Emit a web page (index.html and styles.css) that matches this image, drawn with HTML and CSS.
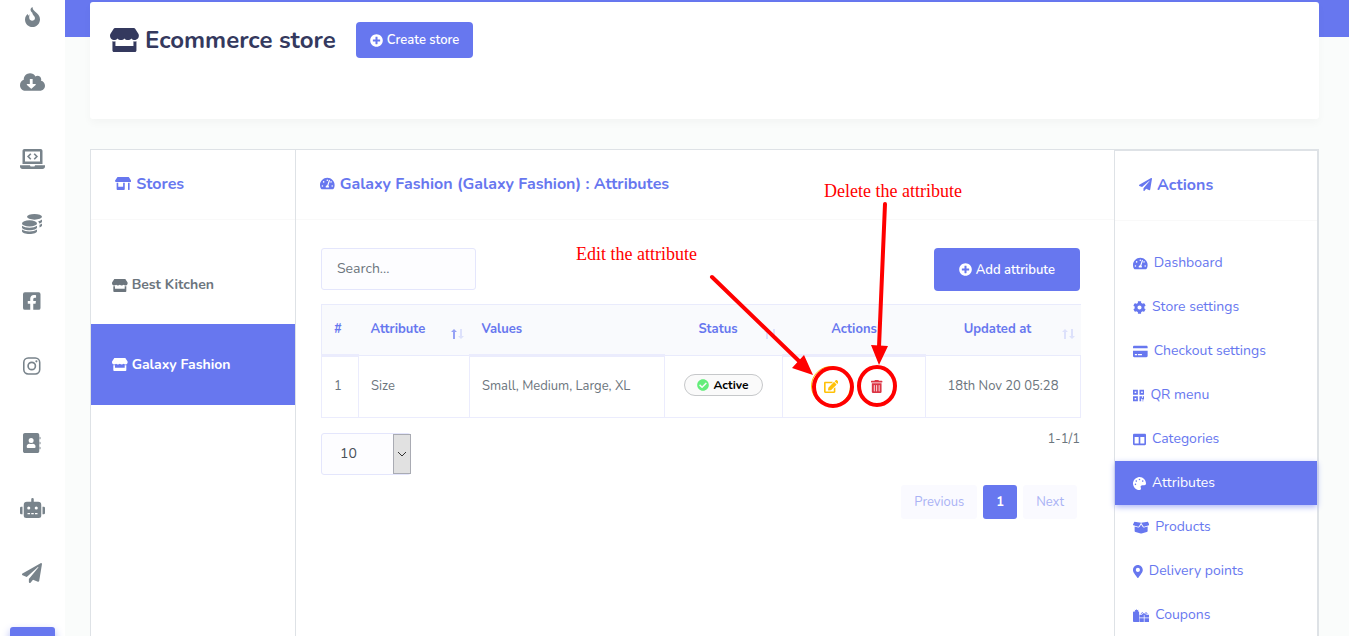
FILE: index.html
```html
<!DOCTYPE html>
<html lang="en">
<head>
<meta charset="utf-8">
<title>Ecommerce store</title>
<link rel="stylesheet" href="styles.css">
</head>
<body>
<svg class="defs" aria-hidden="true">
  <defs>
    <path id="store" d="M602 118.6L537.1 15C531.3 5.7 521 0 510 0H106C95 0 84.7 5.7 78.9 15L14 118.6c-33.5 53.5-3.8 127.9 58.8 136.4 4.5.6 9.1.9 13.7.9 29.6 0 55.8-13 73.8-33.1 18 20.1 44.3 33.1 73.8 33.1 29.6 0 55.8-13 73.8-33.1 18 20.1 44.3 33.1 73.8 33.1 29.6 0 55.8-13 73.8-33.1 18.1 20.1 44.3 33.1 73.8 33.1 4.7 0 9.2-.3 13.7-.9 62.8-8.4 92.6-82.8 59-136.4zM529.5 288c-10 0-19.9-1.5-29.5-3.8V384H116v-99.8c-9.6 2.2-19.5 3.8-29.5 3.8-6 0-12.1-.4-18-1.2-5.6-.8-11.1-2.1-16.4-3.6V480c0 17.7 14.3 32 32 32h448c17.7 0 32-14.3 32-32V283.2c-5.4 1.6-10.8 2.9-16.4 3.6-6.1.8-12.1 1.2-18.2 1.2z"/>
    <path id="plus" d="M256 8C119 8 8 119 8 256s111 248 248 248 248-111 248-248S393 8 256 8zm144 276c0 6.6-5.4 12-12 12h-92v92c0 6.6-5.4 12-12 12h-56c-6.6 0-12-5.4-12-12v-92h-92c-6.6 0-12-5.4-12-12v-56c0-6.6 5.4-12 12-12h92v-92c0-6.6 5.4-12 12-12h56c6.6 0 12 5.4 12 12v92h92c6.6 0 12 5.4 12 12v56z"/>
    <path id="plane" d="M476 3.2L12.5 270.6c-18.1 10.4-15.8 35.6 2.2 43.2L121 358.4l287.3-253.2c5.5-4.9 13.3 2.6 8.6 8.3L176 407v80.5c0 23.6 28.5 32.9 42.5 15.8L282 426l124.6 52.2c14.2 6 30.4-2.9 33-18.2l72-432C515 7.8 493.3-6.8 476 3.2z"/>
    <path id="gauge" d="M288 32C128.94 32 0 160.94 0 320c0 52.8 14.25 102.26 39.06 144.8 5.61 9.62 16.3 15.2 27.44 15.2h443c11.14 0 21.83-5.58 27.44-15.2C561.75 422.26 576 372.8 576 320c0-159.06-128.94-288-288-288zm0 64c14.71 0 26.58 10.13 30.32 23.65-1.11 2.26-2.64 4.23-3.45 6.67l-9.22 27.67c-5.13 3.49-10.97 6.01-17.64 6.01-17.67 0-32-14.33-32-32S270.33 96 288 96zM96 384c-17.67 0-32-14.33-32-32s14.33-32 32-32 32 14.33 32 32-14.33 32-32 32zm48-160c-17.67 0-32-14.33-32-32s14.33-32 32-32 32 14.33 32 32-14.33 32-32 32zm246.77-72.41l-61.33 184C343.13 347.33 352 364.54 352 384c0 11.72-3.38 22.55-8.88 32H232.88c-5.5-9.45-8.88-20.28-8.88-32 0-33.94 26.5-61.43 59.9-63.59l61.34-184.01c4.17-12.56 17.73-19.45 30.36-15.17 12.57 4.19 19.35 17.79 15.17 30.36zm14.66 57.2l15.52-46.55c3.47-1.29 7.13-2.23 11.05-2.23 17.67 0 32 14.33 32 32s-14.33 32-32 32c-11.38-.01-20.89-6.28-26.57-15.22zM480 384c-17.67 0-32-14.33-32-32s14.33-32 32-32 32 14.33 32 32-14.33 32-32 32z"/>
    <path id="sort-up" d="M3 0L6 3H4v7H2V3H0z"/>
    <path id="sort-down" d="M10 10L7 7h2V0h2v7h2z"/>
  </defs>
</svg>

<nav class="rail" aria-label="Main">
  <a href="#" aria-label="Trending"><svg viewBox="0 0 384 512"><path fill-rule="evenodd" d="M194 0c-3 40 12 72 60 112 76 62 130 112 130 200 0 112-86 200-192 200S0 428 0 318c0-78 42-122 74-142 2 20 2 36 10 50 10-14 24-28 36-40C96 258 104 352 184 352c62 0 88-58 58-108-22-36-52-52-54-98-70-52-54-120 6-146z"/></svg></a>
  <a href="#" aria-label="Downloads"><svg viewBox="0 0 640 512"><path fill-rule="evenodd" d="M537.6 226.6c4.1-10.7 6.4-22.4 6.4-34.6 0-53-43-96-96-96-19.7 0-38.1 6-53.3 16.2C367 64.2 315.3 32 256 32c-88.4 0-160 71.6-160 160 0 2.7.1 5.4.2 8.1C40.2 219.8 0 273.2 0 336c0 79.5 64.5 144 144 144h368c70.7 0 128-57.3 128-128 0-61.9-44-113.6-102.4-125.4zM252 176h72v128h64c14 0 22 14 12 26L300 424c-6 6-16 6-22 0l-100-94c-10-12-2-26 12-26h62z"/></svg></a>
  <span class="rail-gap"></span>
  <a href="#" aria-label="Widgets"><svg viewBox="0 0 640 512"><path fill-rule="evenodd" d="M112 0h416c26 0 48 22 48 48v336H64V48c0-26 22-48 48-48zm16 64v256h384V64zM0 416h256c2 20 14 32 32 32h64c18 0 30-12 32-32h256v32c0 35-29 64-64 64H64c-35 0-64-29-64-64z"/><path d="M276 122l-68 70 68 70M364 122l68 70-68 70" fill="none" stroke="currentColor" stroke-width="42"/></svg></a>
  <a href="#" aria-label="Payments"><svg viewBox="0 0 512 512"><ellipse cx="320" cy="72" rx="192" ry="72"/><path d="M416 182c40-10 76-24 96-44v52c0 24-30 44-72 56-8-26-10-44-24-64zM448 278c26-8 48-20 64-34v52c0 20-24 38-64 52z"/><ellipse cx="192" cy="240" rx="192" ry="80"/><path d="M0 300c84 66 300 66 384 0v46c0 36-84 70-192 70S0 382 0 346zM0 396c84 66 300 66 384 0v46c0 36-84 70-192 70S0 478 0 442z"/></svg></a>
  <span class="rail-gap"></span>
  <a href="#" aria-label="Facebook"><svg viewBox="0 0 448 512"><path d="M400 32H48A48 48 0 0 0 0 80v352a48 48 0 0 0 48 48h137.25V327.69h-63V256h63v-54.64c0-62.15 37-96.48 93.67-96.48 27.14 0 55.52 4.84 55.52 4.84v61h-31.27c-30.81 0-40.42 19.12-40.42 38.73V256h68.78l-11 71.69h-57.78V480H400a48 48 0 0 0 48-48V80a48 48 0 0 0-48-48z"/></svg></a>
  <a href="#" aria-label="Instagram"><svg viewBox="0 0 448 512"><rect x="20" y="52" width="408" height="408" rx="112" fill="none" stroke="currentColor" stroke-width="40"/><circle cx="224" cy="256" r="94" fill="none" stroke="currentColor" stroke-width="42"/><circle cx="343" cy="137" r="27"/></svg></a>
  <span class="rail-gap"></span>
  <a href="#" aria-label="Contacts"><svg viewBox="0 0 448 512"><path fill-rule="evenodd" d="M48 0h320c26 0 48 22 48 48v416c0 26-22 48-48 48H48c-26 0-48-22-48-48V48C0 22 22 0 48 0zm160 128a64 64 0 1 0 0 128 64 64 0 0 0 0-128zm-44 144c-36 0-68 28-68 64v28c0 12 10 20 22 20h180c12 0 22-8 22-20v-28c0-36-32-64-68-64-28 10-60 10-88 0z"/><path d="M424 96h8c9 0 16 7 16 16v32c0 9-7 16-16 16h-8zM424 224h8c9 0 16 7 16 16v32c0 9-7 16-16 16h-8zM424 352h8c9 0 16 7 16 16v32c0 9-7 16-16 16h-8z"/></svg></a>
  <a href="#" aria-label="Bots"><svg viewBox="0 0 640 512"><path d="M32,224H64V416H32A32,32,0,0,1,0,384V256A32,32,0,0,1,32,224Zm512-48V448a64,64,0,0,1-64,64H160a64,64,0,0,1-64-64V176a80,80,0,0,1,80-80H288V32a32,32,0,0,1,64,0V96H464A80,80,0,0,1,544,176ZM264,256a40,40,0,1,0-40,40A40,40,0,0,0,264,256Zm-8,128H192v32h64Zm96,0H288v32h64ZM456,256a40,40,0,1,0-40,40A40,40,0,0,0,456,256Zm-8,128H384v32h64ZM640,256V384a32,32,0,0,1-32,32H576V224h32A32,32,0,0,1,640,256Z"/></svg></a>
  <a href="#" aria-label="Broadcast"><svg viewBox="0 0 512 512"><use href="#plane"/></svg></a>
  <a href="#" class="rail-active" aria-label="Store"></a>
</nav>

<div class="page">
  <header class="page-head">
    <h1><svg viewBox="0 0 616 512"><use href="#store"/></svg>Ecommerce store</h1>
    <button class="btn" type="button"><svg viewBox="0 0 512 512"><use href="#plus"/></svg>Create store</button>
  </header>

  <main class="panels">
    <section class="panel stores">
      <h2><svg viewBox="0 0 640 512"><path d="M320 384H128V224H64v256c0 17.7 14.3 32 32 32h256c17.7 0 32-14.3 32-32V224h-64v160zm314.6-241.8l-85.3-128c-6-8.9-16-14.2-26.7-14.2H117.4c-10.7 0-20.7 5.3-26.6 14.2l-85.3 128c-14.2 21.3 1 49.8 26.6 49.8H608c25.5 0 40.7-28.5 26.6-49.8zM512 496c0 8.800 7.200 16 16 16h32c8.800 0 16-7.200 16-16V224h-64v272z"/></svg>Stores</h2>
      <div class="store-list">
        <a href="#"><svg viewBox="0 0 616 512"><use href="#store"/></svg>Best Kitchen</a>
        <a href="#" class="active"><svg viewBox="0 0 616 512"><use href="#store"/></svg>Galaxy Fashion</a>
      </div>
    </section>

    <section class="panel attributes">
      <h2><svg viewBox="0 0 576 512"><use href="#gauge"/></svg>Galaxy Fashion (Galaxy Fashion) : Attributes</h2>
      <div class="body">
        <div class="toolbar">
          <input class="search" type="text" placeholder="Search..." aria-label="Search">
          <button class="btn big" type="button"><svg viewBox="0 0 512 512"><use href="#plus"/></svg>Add attribute</button>
        </div>
        <table>
          <colgroup><col class="c-num"><col class="c-attr"><col class="c-val"><col class="c-stat"><col class="c-act"><col class="c-upd"></colgroup>
          <thead>
            <tr>
              <th class="thick">#</th>
              <th><div class="sortable"><span class="label">Attribute</span><svg class="sort" viewBox="0 0 13 10"><use class="on" href="#sort-up"/><use href="#sort-down"/></svg></div></th>
              <th class="thick">Values</th>
              <th class="mid"><div class="sortable"><span class="label">Status</span><svg class="sort" viewBox="0 0 13 10"><use href="#sort-up"/><use href="#sort-down"/></svg></div></th>
              <th class="mid thick">Actions</th>
              <th class="mid"><div class="sortable"><span class="label">Updated at</span><svg class="sort" viewBox="0 0 13 10"><use href="#sort-up"/><use href="#sort-down"/></svg></div></th>
            </tr>
          </thead>
          <tbody>
            <tr>
              <td>1</td>
              <td>Size</td>
              <td>Small, Medium, Large, XL</td>
              <td class="mid"><span class="badge"><svg viewBox="0 0 512 512"><path d="M504 256c0 136.967-111.033 248-248 248S8 392.967 8 256 119.033 8 256 8s248 111.033 248 248zM227.314 387.314l184-184c6.248-6.248 6.248-16.379 0-22.627l-22.627-22.627c-6.248-6.249-16.379-6.249-22.628 0L216 308.118l-70.059-70.059c-6.248-6.248-16.379-6.248-22.628 0l-22.627 22.627c-6.248 6.248-6.248 16.379 0 22.627l104 104c6.249 6.249 16.379 6.249 22.628.001z"/></svg>Active</span></td>
              <td class="mid"><div class="row-actions">
                <button class="round edit" type="button" aria-label="Edit"><svg viewBox="0 0 576 512"><path d="M402.6 83.2l90.2 90.2c3.8 3.8 3.8 10 0 13.8L274.4 405.6l-92.8 10.3c-12.4 1.4-22.9-9.1-21.5-21.5l10.3-92.8L388.8 83.2c3.8-3.8 10-3.8 13.8 0zm162-22.9l-48.8-48.8c-15.2-15.2-39.9-15.2-55.2 0l-35.4 35.4c-3.8 3.8-3.8 10 0 13.8l90.2 90.2c3.8 3.8 10 3.8 13.8 0l35.4-35.4c15.2-15.3 15.2-40 0-55.2zM384 346.2V448H64V128h229.8c3.2 0 6.2-1.3 8.5-3.5l40-40c7.6-7.6 2.2-20.5-8.5-20.5H48C21.5 64 0 85.5 0 112v352c0 26.5 21.5 48 48 48h352c26.5 0 48-21.5 48-48V306.2c0-10.7-12.9-16-20.5-8.5l-40 40c-2.2 2.3-3.5 5.3-3.5 8.5z"/></svg></button>
                <button class="round delete" type="button" aria-label="Delete"><svg viewBox="0 0 448 512"><path d="M32 464a48 48 0 0 0 48 48h288a48 48 0 0 0 48-48V128H32zm272-256a16 16 0 0 1 32 0v224a16 16 0 0 1-32 0zm-96 0a16 16 0 0 1 32 0v224a16 16 0 0 1-32 0zm-96 0a16 16 0 0 1 32 0v224a16 16 0 0 1-32 0zM432 32H312l-9.4-18.7A24 24 0 0 0 281.1 0H166.8a23.72 23.72 0 0 0-21.4 13.3L136 32H16A16 16 0 0 0 0 48v32a16 16 0 0 0 16 16h416a16 16 0 0 0 16-16V48a16 16 0 0 0-16-16z"/></svg></button>
              </div></td>
              <td class="mid">18th Nov 20 05:28</td>
            </tr>
          </tbody>
        </table>
        <div class="table-foot">
          <div class="select-wrap">
            <select aria-label="Rows per page"><option>10</option><option>25</option><option>50</option></select>
            <span class="select-arrow"><svg viewBox="0 0 10 6"><path d="M1 1l4 4 4-4" fill="none" stroke="currentColor"/></svg></span>
          </div>
          <span>1-1/1</span>
        </div>
        <nav class="pager" aria-label="Pages">
          <button type="button">Previous</button>
          <button type="button" class="current">1</button>
          <button type="button">Next</button>
        </nav>
      </div>
      <svg class="marks" viewBox="570 160 420 260" aria-hidden="true">
        <g fill="none" stroke="#f00" stroke-width="4" stroke-linecap="round">
          <path d="M712 278L800 363M885 205L879 348"/>
          <circle cx="833" cy="388" r="19"/>
          <ellipse cx="877" cy="387" rx="18" ry="19"/>
        </g>
        <path fill="#f00" d="M813 376l-21-7 12-13zM879 366l-8-20 17 1z"/>
      </svg>
      <span class="note note-edit">Edit the attribute</span>
      <span class="note note-delete">Delete the attribute</span>
    </section>

    <aside class="panel actions">
      <h2><svg viewBox="0 0 512 512"><use href="#plane"/></svg>Actions</h2>
      <nav class="menu" aria-label="Store actions">
        <a href="#"><svg viewBox="0 0 576 512"><use href="#gauge"/></svg>Dashboard</a>
        <a href="#"><svg viewBox="0 0 512 512"><path d="M487.4 315.7l-42.6-24.6c4.3-23.2 4.3-47 0-70.2l42.6-24.6c4.9-2.8 7.1-8.6 5.5-14-11.1-35.6-30-67.8-54.7-94.6-3.8-4.1-10-5.1-14.8-2.3L380.8 110c-17.9-15.4-38.5-27.3-60.8-35.1V25.8c0-5.6-3.9-10.5-9.4-11.7-36.7-8.2-74.3-7.8-109.2 0-5.5 1.2-9.4 6.1-9.4 11.7V75c-22.2 7.9-42.8 19.8-60.8 35.1L88.7 85.5c-4.9-2.8-11-1.9-14.8 2.3-24.7 26.7-43.6 58.9-54.7 94.6-1.7 5.4.6 11.2 5.5 14L67.3 221c-4.3 23.2-4.3 47 0 70.2l-42.6 24.6c-4.9 2.8-7.1 8.6-5.5 14 11.1 35.6 30 67.8 54.7 94.6 3.8 4.1 10 5.1 14.8 2.3l42.6-24.6c17.9 15.4 38.5 27.3 60.8 35.1v49.2c0 5.6 3.9 10.5 9.4 11.7 36.7 8.2 74.3 7.8 109.2 0 5.5-1.2 9.4-6.1 9.4-11.7v-49.2c22.2-7.9 42.8-19.8 60.8-35.1l42.6 24.6c4.9 2.8 11 1.9 14.8-2.3 24.7-26.7 43.6-58.9 54.7-94.6 1.5-5.5-.7-11.3-5.6-14.1zM256 336c-44.1 0-80-35.9-80-80s35.9-80 80-80 80 35.9 80 80-35.9 80-80 80z"/></svg>Store settings</a>
        <a href="#"><svg viewBox="0 0 576 512"><path fill-rule="evenodd" d="M0 128V80c0-26 22-48 48-48h480c26 0 48 22 48 48v48zM0 224h576v208c0 26-22 48-48 48H48c-26 0-48-22-48-48zm72 128v56h84v-56zm120 0v56h160v-56z"/></svg>Checkout settings</a>
        <a href="#"><svg viewBox="0 0 448 512"><path fill-rule="evenodd" d="M0 32h192v192H0zm64 64v64h64V96zM256 32h192v192H256zm64 64v64h64V96zM0 288h192v192H0zm64 64v64h64v-64zM256 288h96v64h32v-64h64v128h-96v-32h-32v96h-64zM352 448h32v32h-32zM416 448h32v32h-32z"/></svg>QR menu</a>
        <a href="#"><svg viewBox="0 0 512 512"><path fill-rule="evenodd" d="M48 32h416c26 0 48 22 48 48v352c0 26-22 48-48 48H48c-26 0-48-22-48-48V80c0-26 22-48 48-48zm16 128v256h160V160zm224 0v256h160V160z"/></svg>Categories</a>
        <a href="#" class="active"><svg viewBox="0 0 512 512"><path d="M204.3 5C104.9 24.4 24.8 104.3 5.2 203.4c-37 187 131.7 326.4 258.8 306.7 41.2-6.4 61.4-54.6 42.5-91.7-23.1-45.4 9.9-98.4 60.9-98.4h79.7c35.8 0 64.8-29.6 64.9-65.3C511.5 97.1 368.1-26.9 204.3 5zM96 320c-17.7 0-32-14.3-32-32s14.3-32 32-32 32 14.3 32 32-14.3 32-32 32zm32-128c-17.7 0-32-14.3-32-32s14.3-32 32-32 32 14.3 32 32-14.3 32-32 32zm128-64c-17.7 0-32-14.3-32-32s14.3-32 32-32 32 14.3 32 32-14.3 32-32 32zm128 64c-17.7 0-32-14.3-32-32s14.3-32 32-32 32 14.3 32 32-14.3 32-32 32z"/></svg>Attributes</a>
        <a href="#"><svg viewBox="0 0 640 512"><path d="M53 34l267 34-86 142c-6 10-18 15-29 12L14 168c-12-4-18-18-12-29zM587 34L320 68l86 142c6 10 18 15 29 12l191-54c12-4 18-18 12-29zM64 214l140 40c22 6 46-4 58-24l58-96 58 96c12 20 36 30 58 24l140-40v178c0 22-15 41-36 46l-204 51c-10 3-22 3-32 0l-204-51c-21-5-36-24-36-46z"/></svg>Products</a>
        <a href="#"><svg viewBox="0 0 384 512"><path d="M172.268 501.67C26.97 291.031 0 269.413 0 192 0 85.961 85.961 0 192 0s192 85.961 192 192c0 77.413-26.97 99.031-172.268 309.67-9.535 13.774-29.93 13.773-39.464 0zM192 272c44.183 0 80-35.817 80-80s-35.817-80-80-80-80 35.817-80 80 35.817 80 80 80z"/></svg>Delivery points</a>
        <a href="#"><svg viewBox="0 0 640 512"><path d="M32 96h56L70 30l50 18 20-48 24 48 48-18-16 66h44v416H32c-18 0-32-14-32-32V128c0-18 14-32 32-32zM272 224h154v112H256v-96c0-9 7-16 16-16zM454 224h170c9 0 16 7 16 16v96H454zM256 368h170v144H272c-9 0-16-7-16-16zM454 368h186v128c0 9-7 16-16 16H454z"/><path d="M440 232c-24-70-62-100-92-84-36 22-8 76 92 76 100 0 128-54 92-76-30-16-68 14-92 84z" fill="none" stroke="currentColor" stroke-width="38"/></svg>Coupons</a>
      </nav>
    </aside>
  </main>
</div>
</body>
</html>
```
FILE: styles.css
```css
* { box-sizing: border-box; }

body {
  display: flex;
  height: 100vh;
  margin: 0;
  overflow: hidden;
  background: #fafcfb;
  color: #6c757d;
  font: 14px/20px Nunito, Lato, sans-serif;
}

a { color: inherit; text-decoration: none; }
button, input, select { font: inherit; }
svg { flex: none; width: auto; height: 1em; fill: currentColor; }
.defs { position: absolute; width: 0; height: 0; }

.rail {
  display: flex;
  flex: none;
  flex-direction: column;
  width: 65px;
  margin-top: -16px;
  background: #fff;
  color: #78838b;
}
.rail a {
  display: flex;
  flex: none;
  align-items: center;
  justify-content: center;
  height: 65px;
  padding-right: 1px;
  font-size: 20px;
}
.rail-gap { flex: none; height: 12px; }
.rail .rail-active {
  height: 45px;
  margin: 22px 10px 0;
  border-radius: 3px;
  background: #6777ef;
  box-shadow: 0 4px 8px #acb5f6;
}

.page {
  display: flex;
  flex: 1;
  flex-direction: column;
  min-width: 0;
  padding: 2px 30px 0 25px;
  background: linear-gradient(#6777ef 37px, transparent 37px);
}
.page-head {
  display: flex;
  flex: none;
  align-items: flex-start;
  gap: 20px;
  height: 117px;
  margin-bottom: 30px;
  padding: 20px;
  border-radius: 3px;
  background: #fff;
  box-shadow: 0 4px 8px rgba(0, 0, 0, .03);
}
h1 {
  display: flex;
  align-items: center;
  gap: 6px;
  margin: 0;
  color: #34395e;
  font-size: 24px;
  line-height: 36px;
}

.btn {
  display: flex;
  align-items: center;
  justify-content: center;
  gap: 4px;
  height: 36px;
  padding: 0 14px;
  border: 0;
  border-radius: 4px;
  background: #6777ef;
  color: #fff;
  font-size: 13px;
  font-weight: 600;
}
.btn svg { height: 13px; }
.btn.big { height: 43px; padding: 0 25px; }

.panels {
  display: grid;
  flex: 1;
  grid-template-columns: 204fr 819fr 204fr;
  min-height: 0;
  border: 1px solid #dee2e6;
  border-bottom: 0;
  background: #fff;
}
.panel { position: relative; min-width: 0; }
.attributes { border-left: 1px solid #dee2e6; }
.actions { border: solid #dee2e6; border-width: 1px 1px 0; }
h2 {
  display: flex;
  align-items: center;
  gap: 5px;
  height: 70px;
  margin: 0;
  padding: 0 24px 2px;
  border-bottom: 1px solid #f9f9f9;
  color: #6777ef;
  font-size: 16px;
}
h2 svg { height: 13px; }

.store-list { padding-top: 26px; font-weight: 700; }
.store-list a {
  display: flex;
  align-items: center;
  gap: 4px;
  height: 78px;
  padding: 0 21px;
}
.store-list svg { height: 13px; }
.store-list .active { height: 81px; background: #6777ef; color: #fff; }

.body { padding: 28px 34px 0 25px; font-size: 13px; }
.toolbar { display: flex; justify-content: space-between; margin-bottom: 13px; }
.search {
  width: 155px;
  height: 42px;
  padding: 0 15px 1px;
  border: 1px solid #e4e6fc;
  border-radius: 3px;
  background: #fdfdff;
  font-size: 14px;
}
.search::placeholder { color: #6c757d; opacity: 1; }

table { width: 100%; border-collapse: collapse; table-layout: fixed; }
.c-num { width: 37px; }
.c-attr { width: 111px; }
.c-val { width: 195px; }
.c-stat { width: 118px; }
.c-act { width: 143px; }
.c-upd { width: 155px; }
th, td { padding: 0 12px 2px; text-align: left; white-space: nowrap; }
th {
  height: 51px;
  border-top: 1px solid #e9ebfc;
  border-bottom: 1px solid #e9ebfc;
  background: #f9fafd;
  color: #6777ef;
}
th:first-child { border-left: 1px solid #e9ebfc; }
th.thick { border-bottom: 3px solid #ebecfd; }
td { height: 62px; border: 1px solid #ebecfd; }
th.mid, td.mid { text-align: center; }
.sortable { display: flex; align-items: flex-end; gap: 4px; margin-right: -6px; }
.sortable .label { flex: 1; }
.sort { height: 10px; fill: #dde1fb; }
.sort .on { fill: #96a2f5; }

.badge {
  display: inline-flex;
  align-items: center;
  gap: 4px;
  height: 22px;
  padding: 0 13px 0 12px;
  border: 1px solid #c6c8ca;
  border-radius: 11px;
  background: #fafafa;
  color: #000;
  font-size: 12px;
  font-weight: 700;
}
.badge svg { height: 12px; color: #63ed7a; }
.row-actions { display: flex; justify-content: center; gap: 6px; }
.round {
  display: flex;
  align-items: center;
  justify-content: center;
  width: 40px;
  height: 40px;
  padding: 0;
  border: 1px solid #ffc107;
  border-radius: 50%;
  background: #fff;
  color: #ffc107;
}
.round svg { height: 13px; }
.round.delete { border-color: #fff; color: #dc3545; }

.table-foot { display: flex; justify-content: space-between; margin-top: 15px; line-height: 12px; }
.select-wrap { position: relative; }
select {
  width: 90px;
  height: 42px;
  padding: 0 18px;
  border: 1px solid #e4e6fc;
  border-radius: 3px;
  appearance: none;
  background: #fdfdff;
  color: #495057;
  font-size: 14px;
}
.select-arrow {
  position: absolute;
  top: 1px;
  right: 0;
  display: flex;
  align-items: center;
  justify-content: center;
  width: 18px;
  height: 40px;
  border: 1px solid #a9abb3;
  background: #e1e1e1;
  color: #333;
  pointer-events: none;
}
.select-arrow svg { height: 6px; }

.pager { display: flex; justify-content: flex-end; gap: 6px; margin-top: 10px; padding-right: 3px; }
.pager button {
  height: 34px;
  padding: 0 13px;
  border: 0;
  border-radius: 3px;
  background: #fafaff;
  color: #aab3f5;
}
.pager .current { background: #6777ef; color: #fff; font-weight: 700; }

.menu { padding-top: 20px; color: #6777ef; }
.menu a {
  display: flex;
  align-items: center;
  gap: 6px;
  height: 44px;
  padding: 0 18px;
}
.menu svg { height: 13px; }
.menu .active { background: #6777ef; box-shadow: 0 2px 6px #acb5f6; color: #fff; }

/* callouts drawn over the table */
.marks { position: absolute; top: 9px; left: 274px; height: 260px; pointer-events: none; }
.note {
  position: absolute;
  color: #f00;
  font: 18px/20px "Liberation Serif", serif;
  white-space: nowrap;
}
.note-edit { top: 94px; left: 280px; }
.note-delete { top: 31px; left: 528px; }
```
